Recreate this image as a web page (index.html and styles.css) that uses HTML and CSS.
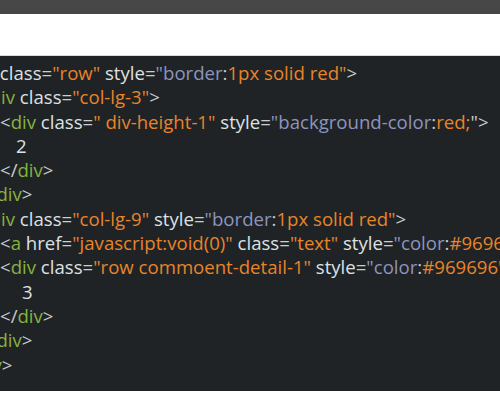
FILE: index.html
```html
<!DOCTYPE html>
<html>
<head>
<meta charset="utf-8">
<link rel="stylesheet" href="styles.css">
</head>
<body>
<div class="topbar"></div>
<div class="gap"></div>
<div class="code">
  <div class="lines">
    <div class="ln i0"><span class="p">&lt;</span><span class="t">div</span> <span class="a">class</span><span class="p">=</span><span class="v">"row"</span> <span class="a">style</span><span class="p">=</span><span class="s">"border</span><span class="p">:</span><span class="v">1px solid red"</span><span class="p">&gt;</span></div>
    <div class="ln i1"><span class="p">&lt;</span><span class="t">div</span> <span class="a">class</span><span class="p">=</span><span class="v">"col-lg-3"</span><span class="p">&gt;</span></div>
    <div class="ln i2"><span class="p">&lt;</span><span class="t">div</span> <span class="a">class</span><span class="p">=</span><span class="v">" div-height-1"</span> <span class="a">style</span><span class="p">=</span><span class="s">"background-color</span><span class="p">:</span><span class="v">red;</span><span class="p">"&gt;</span></div>
    <div class="ln n2"><span class="a">2</span></div>
    <div class="ln i2"><span class="p">&lt;/</span><span class="t">div</span><span class="p">&gt;</span></div>
    <div class="ln i1"><span class="p">&lt;/</span><span class="t">div</span><span class="p">&gt;</span></div>
    <div class="ln i1"><span class="p">&lt;</span><span class="t">div</span> <span class="a">class</span><span class="p">=</span><span class="v">"col-lg-9"</span> <span class="a">style</span><span class="p">=</span><span class="s">"border</span><span class="p">:</span><span class="v">1px solid red"</span><span class="p">&gt;</span></div>
    <div class="ln i2"><span class="p">&lt;</span><span class="t">a</span> <span class="a">href</span><span class="p">=</span><span class="v">"javascript:void(0)"</span> <span class="a">class</span><span class="p">=</span><span class="v">"text"</span> <span class="a">style</span><span class="p">=</span><span class="s">"color</span><span class="p">:</span><span class="v">#969696"</span><span class="p">&gt;</span></div>
    <div class="ln i2"><span class="p">&lt;</span><span class="t">div</span> <span class="a">class</span><span class="p">=</span><span class="v">"row commoent-detail-1"</span> <span class="a">style</span><span class="p">=</span><span class="s">"color</span><span class="p">:</span><span class="v">#969696"</span><span class="p">&gt;</span></div>
    <div class="ln n3"><span class="a">3</span></div>
    <div class="ln i2"><span class="p">&lt;/</span><span class="t">div</span><span class="p">&gt;</span></div>
    <div class="ln i1"><span class="p">&lt;/</span><span class="t">div</span><span class="p">&gt;</span></div>
    <div class="ln i0"><span class="p">&lt;/</span><span class="t">div</span><span class="p">&gt;</span></div>
  </div>
</div>
</body>
</html>
```
FILE: styles.css
```css
html, body {
  margin: 0;
  padding: 0;
  background: #ffffff;
}
.topbar {
  height: 14px;
  background: #474747;
}
.gap {
  height: 41px;
  border-bottom: 1px solid #d8dcdc;
}
.code {
  height: 335px;
  background: #1f2326;
  overflow: hidden;
  padding-top: 5px;
  box-sizing: border-box;
}
.lines {
  margin-left: -41px;
  font-family: "Open Sans", sans-serif;
  font-size: 18.6px;
  line-height: 24.3px;
  white-space: nowrap;
}
.ln { height: 24.3px; }
.i0 { padding-left: 0; }
.i1 { padding-left: 20px; }
.i2 { padding-left: 41px; }
.n2 { padding-left: 57px; }
.n3 { padding-left: 63px; }
.p { color: #c9ced1; }
.t { color: #86b33e; }
.a { color: #dde1e4; }
.v { color: #e8842a; }
.s { color: #8e94bd; }
```
